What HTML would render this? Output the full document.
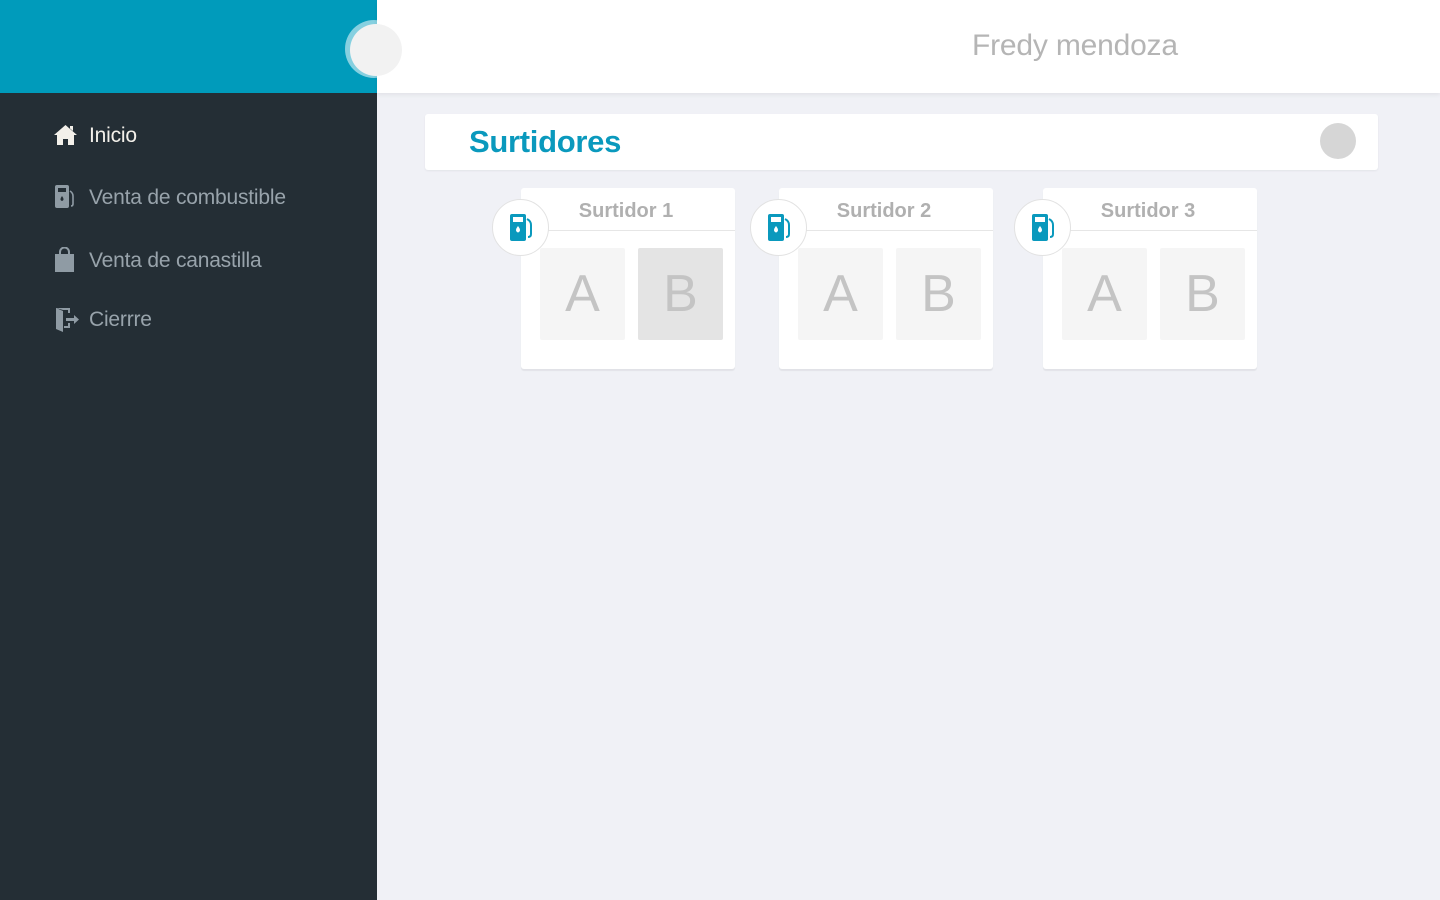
<!DOCTYPE html>
<html><head><meta charset="utf-8"><style>
*{margin:0;padding:0;box-sizing:border-box}
body{width:1440px;height:900px;overflow:hidden;background:#f0f1f6;font-family:"Liberation Sans",sans-serif;position:relative}
.top{position:absolute;left:0;top:0;width:377px;height:93px;background:#009bbb}
.hdr{position:absolute;left:377px;top:0;width:1063px;height:93px;background:#fff;box-shadow:0 2px 4px rgba(0,0,0,.06)}
.side{position:absolute;left:0;top:93px;width:377px;height:807px;background:#242e35}
.ring{position:absolute;left:345px;top:20px;width:58px;height:58px;border-radius:50%;background:#86d0e0}
.knob{position:absolute;left:350px;top:24px;width:52px;height:52px;border-radius:50%;background:#f2f2f2}
.name{position:absolute;left:972px;top:29px;font-size:30px;color:#b5b5b5;letter-spacing:-0.2px}
.nav{position:absolute;left:89px;font-size:21px;color:#98a3ab;letter-spacing:-0.2px}
.ic{position:absolute}
.panel{position:absolute;left:425px;top:114px;width:953px;height:56px;background:#fff;border-radius:3px;box-shadow:0 1px 2px rgba(0,0,0,.06)}
.panel h1{position:absolute;left:44px;top:10px;font-size:31px;font-weight:bold;color:#0a99bd;letter-spacing:-0.3px}
.dot{position:absolute;left:895px;top:9px;width:36px;height:36px;border-radius:50%;background:#d6d6d6}
.card{position:absolute;top:188px;width:214px;height:181px;background:#fff;border-radius:3px;box-shadow:0 2px 1px rgba(0,0,0,.06)}
.card .t{position:absolute;left:0;right:4px;top:12px;text-align:center;font-size:20px;font-weight:bold;color:#b0b0b0}
.card .ln{position:absolute;left:0;right:0;top:42px;border-top:1px solid #e6e6e6}
.box{position:absolute;top:60px;width:85px;height:92px;background:#f5f5f5;border-radius:2px;text-align:center;line-height:92px;font-size:52px;color:#c4c4c4}
.circ{position:absolute;top:199px;width:57px;height:57px;border-radius:50%;background:#fff;border:1px solid #e2e2e2}
.circ svg{position:absolute;left:17px;top:14px}
</style></head><body>
<div class="top"></div><div class="side"></div>
<div class="ring"></div><div class="hdr"></div><div class="knob"></div>
<div class="name">Fredy mendoza</div>

<svg class="ic" style="left:53px;top:124px" width="25" height="22" viewBox="0 0 25 22"><path d="M12.5 1 L24 11 L21 11 L21 21 L15 21 L15 15 L10 15 L10 21 L4 21 L4 11 L1 11 Z M17 2 h3 v5 l-3 -2.5z" fill="#f3f0ea"/></svg>
<div class="nav" style="top:124px;color:#f3f0ea">Inicio</div>
<svg class="ic" style="left:55px;top:185px" width="20" height="24" viewBox="0 0 20 24"><rect x="0" y="0" width="14" height="23" rx="2" fill="#8f9ba4"/><rect x="3" y="3" width="8" height="4" fill="#242e35"/><path d="M7 11 q-3 4 0 5 q3 -1 0 -5z" fill="#242e35"/><path d="M15 6 q3 2 3 5 v8 q0 2 -2 2" stroke="#8f9ba4" stroke-width="1.6" fill="none"/></svg>
<div class="nav" style="top:186px">Venta de combustible</div>
<svg class="ic" style="left:55px;top:247px" width="19" height="25" viewBox="0 0 19 25"><path d="M5 8 v-3 a4.5 4.5 0 0 1 9 0 v3" stroke="#8f9ba4" stroke-width="2" fill="none"/><rect x="0" y="7" width="19" height="18" fill="#8f9ba4"/></svg>
<div class="nav" style="top:249px">Venta de canastilla</div>
<svg class="ic" style="left:56px;top:307px" width="24" height="26" viewBox="0 0 24 26"><path d="M0 1 L14 1 L14 6 L12 6 L12 3 L7 3 Z M0 1 L7 4 L7 25 L0 22 Z M12 16 L14 16 L14 21 L8 21 L8 19 L12 19Z" fill="#8f9ba4"/><path d="M10 11 h8 v-3 l5 4.5 -5 4.5 v-3 h-8z" fill="#8f9ba4"/></svg>
<div class="nav" style="top:308px">Cierrre</div>

<div class="panel"><h1>Surtidores</h1><div class="dot"></div></div>

<div class="card" style="left:521px"><div class="t">Surtidor 1</div><div class="ln"></div><div class="box" style="left:19px">A</div><div class="box" style="left:117px;background:#e4e4e4">B</div></div>
<div class="card" style="left:779px"><div class="t">Surtidor 2</div><div class="ln"></div><div class="box" style="left:19px">A</div><div class="box" style="left:117px">B</div></div>
<div class="card" style="left:1043px"><div class="t">Surtidor 3</div><div class="ln"></div><div class="box" style="left:19px">A</div><div class="box" style="left:117px">B</div></div>

<div class="circ" style="left:492px"><svg width="24" height="28" viewBox="0 0 24 28"><rect x="0" y="0" width="16" height="27" rx="2" fill="#0a99bd"/><rect x="3" y="3" width="10" height="5" fill="#fff"/><path d="M8 12 q-4 5 0 6.5 q4 -1.5 0 -6.5z" fill="#fff"/><path d="M17 5 q4 2 4 6 v9 q0 3 -3 3" stroke="#0a99bd" stroke-width="2" fill="none"/></svg></div>
<div class="circ" style="left:750px"><svg width="24" height="28" viewBox="0 0 24 28"><rect x="0" y="0" width="16" height="27" rx="2" fill="#0a99bd"/><rect x="3" y="3" width="10" height="5" fill="#fff"/><path d="M8 12 q-4 5 0 6.5 q4 -1.5 0 -6.5z" fill="#fff"/><path d="M17 5 q4 2 4 6 v9 q0 3 -3 3" stroke="#0a99bd" stroke-width="2" fill="none"/></svg></div>
<div class="circ" style="left:1014px"><svg width="24" height="28" viewBox="0 0 24 28"><rect x="0" y="0" width="16" height="27" rx="2" fill="#0a99bd"/><rect x="3" y="3" width="10" height="5" fill="#fff"/><path d="M8 12 q-4 5 0 6.5 q4 -1.5 0 -6.5z" fill="#fff"/><path d="M17 5 q4 2 4 6 v9 q0 3 -3 3" stroke="#0a99bd" stroke-width="2" fill="none"/></svg></div>
</body></html>
